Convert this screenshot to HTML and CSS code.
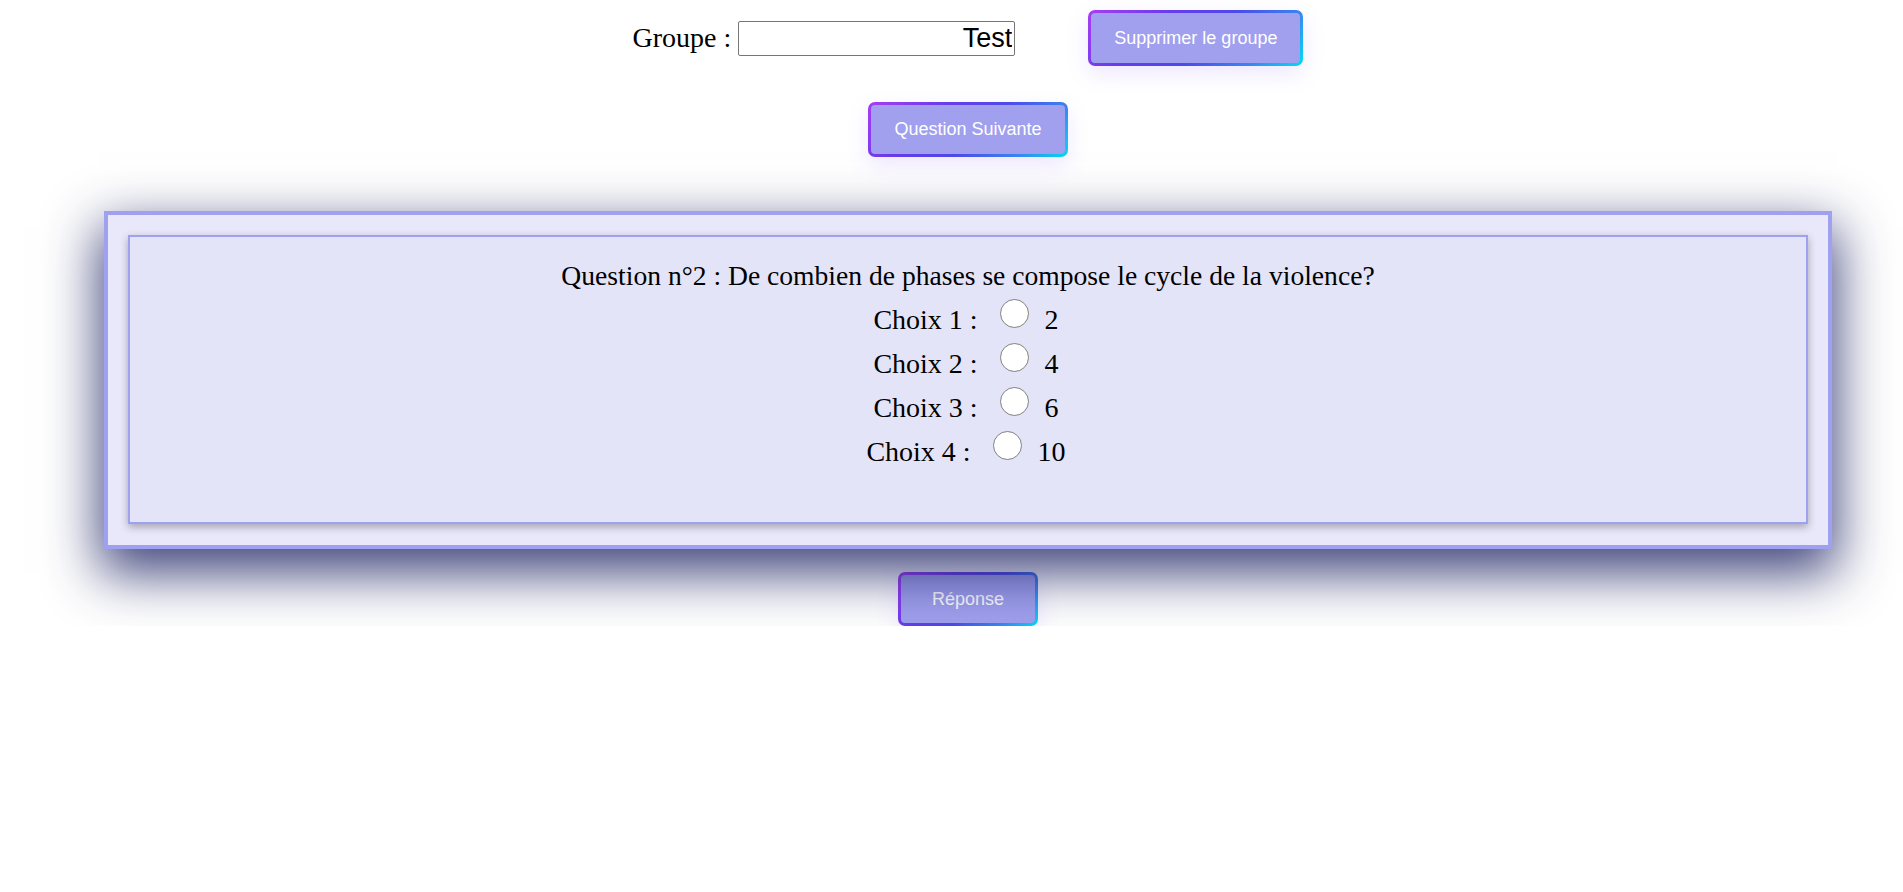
FILE: index.html
```html
<!DOCTYPE html>
<html lang="fr">
<head>
<meta charset="utf-8">
<title>Quiz</title>
<link rel="stylesheet" href="styles.css">
</head>
<body>
<main class="page">
  <div class="group-row">
    <label class="group-label" for="groupe">Groupe :</label>
    <input id="groupe" class="group-input" type="text" value="Test">
    <button class="btn btn-delete" type="button">Supprimer le groupe</button>
  </div>
  <div class="btn-row next-row">
    <button class="btn" type="button">Question Suivante</button>
  </div>
  <section class="quiz-frame">
    <div class="quiz-card">
      <div class="question">Question n°2 : De combien de phases se compose le cycle de la violence?</div>
      <div class="choice"><span>Choix 1 :</span><input class="radio" type="radio" name="choix"><span>2</span></div>
      <div class="choice"><span>Choix 2 :</span><input class="radio" type="radio" name="choix"><span>4</span></div>
      <div class="choice"><span>Choix 3 :</span><input class="radio" type="radio" name="choix"><span>6</span></div>
      <div class="choice"><span>Choix 4 :</span><input class="radio" type="radio" name="choix"><span>10</span></div>
    </div>
  </section>
  <div class="btn-row answer-row">
    <button class="btn btn-answer" type="button">Réponse</button>
  </div>
</main>
</body>
</html>
```
FILE: styles.css
```css
html, body {
  margin: 0;
  padding: 0;
  background: #ffffff;
}

body {
  font-family: "Liberation Serif", "Times New Roman", serif;
  font-size: 28px;
  color: #000;
}

.page {
  margin-left: 33px;
  padding-top: 10px;
}

.group-row {
  display: flex;
  justify-content: center;
  align-items: center;
  height: 56px;
}

.group-label {
  margin-right: 7px;
}

.group-input {
  box-sizing: border-box;
  width: 277px;
  height: 35px;
  margin: 0 73px 0 0;
  padding: 1px 2px;
  border: 1px solid #767676;
  border-radius: 2px;
  background: #fff;
  font-family: "Liberation Sans", Arial, sans-serif;
  font-size: 27px;
  color: #000;
  text-align: right;
}

.btn {
  box-sizing: border-box;
  height: 55px;
  padding: 0 23px;
  border: 3px solid transparent;
  border-radius: 7px;
  background:
    linear-gradient(#a0a0ee, #a0a0ee) padding-box,
    linear-gradient(135deg, #a83cf6 0%, #6a3ce9 30%, #4d4ae9 55%, #3a86f0 80%, #00dcf4 100%) border-box;
  color: #ffffff;
  font-family: "Liberation Sans", Arial, sans-serif;
  font-size: 18px;
  box-shadow: 0 8px 22px rgba(150, 110, 255, 0.16);
  cursor: pointer;
}

.btn-delete {
  height: 56px;
}

.btn-row {
  display: flex;
  justify-content: center;
}

.next-row {
  margin-top: 36px;
}

.quiz-frame {
  position: relative;
  margin: 54px 71px 0 71px;
  padding: 20px 20px 21px 20px;
  border: 4px solid #a0a0f0;
  background: #e8e8fa;
  box-shadow: 0 20px 50px 4px rgba(30, 36, 100, 0.85);
}

.quiz-card {
  padding: 16.5px 0 48.5px;
  border: 2px solid #a0a0f0;
  background: #e4e4f8;
  text-align: center;
  line-height: 44px;
  box-shadow: 0 3px 8px rgba(0, 0, 0, 0.3);
}

.question {
  font-size: 27.6px;
}

.choice {
  padding-right: 4px;
}

.radio {
  appearance: none;
  -webkit-appearance: none;
  box-sizing: border-box;
  width: 29px;
  height: 29px;
  margin: 0 16px 0 22px;
  border: 1px solid #808080;
  border-radius: 50%;
  background: #ffffff;
  vertical-align: 1px;
}

.answer-row {
  margin-top: 23px;
}

.btn-answer {
  height: 54px;
  padding: 0 30.5px;
  color: #ffffff;
}
```
